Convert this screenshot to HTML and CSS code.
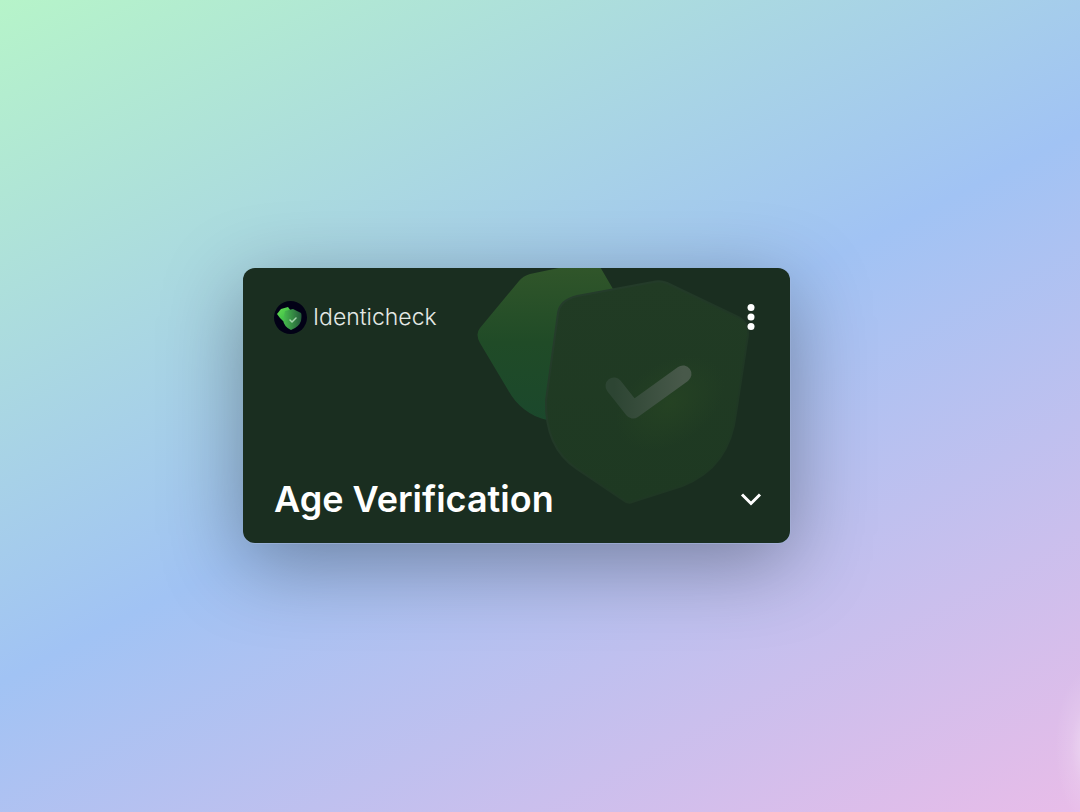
FILE: index.html
```html
<!DOCTYPE html>
<html lang="en">
<head>
<meta charset="utf-8">
<meta name="viewport" content="width=device-width, initial-scale=1">
<title>Age Verification</title>
<link rel="stylesheet" href="styles.css">
</head>
<body>
<main class="page">
  <article class="card">
    <svg class="card-art" viewBox="470 268 320 275" aria-hidden="true">
      <defs>
        <linearGradient id="back" x1="0" y1="0" x2="0" y2="1">
          <stop offset="0" stop-color="#31562a"/>
          <stop offset=".5" stop-color="#204b27"/>
          <stop offset="1" stop-color="#1b482c"/>
        </linearGradient>
        <linearGradient id="front" x1="0" y1="0" x2="0" y2="1">
          <stop offset="0" stop-color="#213b24"/>
          <stop offset="1" stop-color="#1e3922"/>
        </linearGradient>
        <linearGradient id="rim" x1="0" y1="0" x2="1" y2="1">
          <stop offset="0" stop-color="#263e2c"/>
          <stop offset=".6" stop-color="#203725"/>
          <stop offset="1" stop-color="#1e3922"/>
        </linearGradient>
        <radialGradient id="glow">
          <stop offset="0" stop-color="#264423" stop-opacity=".8"/>
          <stop offset="1" stop-color="#264423" stop-opacity="0"/>
        </radialGradient>
        <linearGradient id="tick" x1="0" y1="0" x2="1" y2="0">
          <stop offset="0" stop-color="#2d4533"/>
          <stop offset="1" stop-color="#48594a"/>
        </linearGradient>
      </defs>
      <path fill="url(#back)" d="M480 328 519 281Q523 276 530 274L573 265H599L613 289 600 420H547C530 416 517 406 508 390L480 343Q475 334 480 328Z"/>
      <path fill="url(#front)" stroke="url(#rim)" stroke-width="2" d="M577 296 653 282Q660 280 667 283L740 318Q749 323 748 335L736 413C732 449 714 474 682 486L632 502Q628 504 623 500L577 469C556 455 545 432 546 400L558 313Q560 300 577 296Z"/>
      <ellipse fill="url(#glow)" cx="670" cy="403" rx="60" ry="40" transform="rotate(-35 670 403)"/>
      <path fill="none" stroke="url(#tick)" stroke-width="17" stroke-linecap="round" stroke-linejoin="round" d="M614 386 633 410 683 374"/>
    </svg>
    <header class="card-row">
      <div class="issuer">
        <svg class="issuer-logo" viewBox="0 0 33 33" aria-hidden="true">
          <defs>
            <linearGradient id="leaf" x1="0" y1="0" x2="1" y2="1">
              <stop offset="0" stop-color="#6ade55"/>
              <stop offset="1" stop-color="#28b040"/>
            </linearGradient>
            <linearGradient id="shield" x1="0" y1="0" x2="1" y2="0">
              <stop offset="0" stop-color="#48bf4e"/>
              <stop offset="1" stop-color="#245a3a"/>
            </linearGradient>
          </defs>
          <circle cx="16.500" cy="16.500" r="16.500" fill="#020116"/>
          <path fill="url(#leaf)" d="M3 13 7 8 14 6 17 10 15 21 9 20 6 17Z"/>
          <path fill="url(#shield)" d="M11 10 19 8 27 12Q28 14 27 20 25 26 17 29 10 26 9 19Z"/>
          <path fill="none" stroke="#a6d6ad" stroke-width="1.500" stroke-linecap="round" stroke-linejoin="round" d="M16 19 18 21 22 17"/>
        </svg>
        <span class="issuer-name">Identicheck</span>
      </div>
      <button class="icon-button" type="button" aria-label="More options">
        <svg class="icon" viewBox="0 0 32 32" fill="#fff" aria-hidden="true">
          <circle cx="16" cy="6.500" r="3.500"/><circle cx="16" cy="16" r="3.500"/><circle cx="16" cy="25.500" r="3.500"/>
        </svg>
      </button>
    </header>
    <div class="card-row">
      <h1 class="card-title">Age Verification</h1>
      <button class="icon-button" type="button" aria-label="Show details">
        <svg class="icon" viewBox="0 0 32 32" fill="none" stroke="#fff" stroke-width="3" aria-hidden="true">
          <path d="M7 11.500 16 20.500 25 11.500"/>
        </svg>
      </button>
    </div>
  </article>
</main>
</body>
</html>
```
FILE: styles.css
```css
* {
  box-sizing: border-box;
}

body {
  margin: 0;
  font-family: Inter, "Liberation Sans", sans-serif;
  color: #fff;
}

.page {
  display: flex;
  align-items: center;
  justify-content: center;
  min-height: 100vh;
  padding: 24px 70px 26px 23px;
  background:
    radial-gradient(ellipse 36px 80px at 101% 92%, rgba(255, 255, 255, 0.45), rgba(255, 255, 255, 0.12) 55%, rgba(255, 255, 255, 0)),
    linear-gradient(153deg, #b6f4c9 0%, #a1c3f4 50%, #e8bce8 100%);
}

.card {
  position: relative;
  display: flex;
  flex-direction: column;
  justify-content: space-between;
  width: 100%;
  max-width: 547px;
  min-height: 275px;
  padding: 33px 23px 24px 31px;
  border-radius: 12px;
  background: #1a2e20;
  box-shadow:
    0 1px 0 rgba(170, 190, 230, 0.5),
    1px 0 0 rgba(170, 190, 230, 0.3),
    0 20px 80px rgba(0, 0, 0, 0.34);
}

.card-art {
  position: absolute;
  top: 0;
  right: 0;
  height: 100%;
  border-radius: 0 12px 12px 0;
}

.card-row {
  position: relative;
  display: flex;
  align-items: center;
  justify-content: space-between;
}

.issuer {
  display: flex;
  align-items: center;
  gap: 6px;
}

.issuer-logo {
  width: 33px;
  height: 33px;
}

.issuer-name {
  font-size: 23px;
  font-weight: 300;
  line-height: 32px;
  color: #e4e9e5;
}

.card-title {
  margin: 0;
  font-size: 36px;
  font-weight: 600;
  line-height: 40px;
}

.icon-button {
  display: flex;
  padding: 0;
  border: 0;
  background: none;
  cursor: pointer;
}

.icon {
  width: 32px;
  height: 32px;
}
```
